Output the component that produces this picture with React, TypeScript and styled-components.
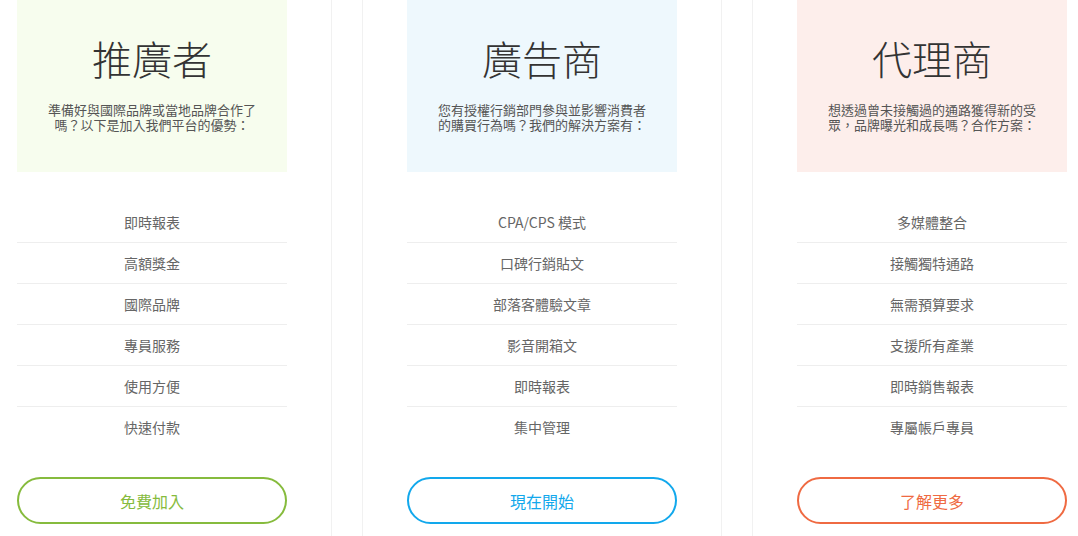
import styled, { createGlobalStyle } from "styled-components";

type Plan = {
  title: string;
  intro: string[];
  items: string[];
  cta: string;
  tint: string;
  accent: string;
};

const plans: Plan[] = [
  {
    title: "推廣者",
    intro: ["準備好與國際品牌或當地品牌合作了", "嗎？以下是加入我們平台的優勢："],
    items: ["即時報表", "高額獎金", "國際品牌", "專員服務", "使用方便", "快速付款"],
    cta: "免費加入",
    tint: "#f7fdee",
    accent: "#86bb3d",
  },
  {
    title: "廣告商",
    intro: ["您有授權行銷部門參與並影響消費者", "的購買行為嗎？我們的解決方案有："],
    items: ["CPA/CPS 模式", "口碑行銷貼文", "部落客體驗文章", "影音開箱文", "即時報表", "集中管理"],
    cta: "現在開始",
    tint: "#eef8fd",
    accent: "#12a8ec",
  },
  {
    title: "代理商",
    intro: ["想透過曾未接觸過的通路獲得新的受", "眾，品牌曝光和成長嗎？合作方案："],
    items: ["多媒體整合", "接觸獨特通路", "無需預算要求", "支援所有產業", "即時銷售報表", "專屬帳戶專員"],
    cta: "了解更多",
    tint: "#fdeeeb",
    accent: "#ef6a42",
  },
];

const App = () => {
  return (
    <>
      <GlobalStyle />
      <Row>
        {plans.map((plan) => (
          <Column key={plan.title}>
            <Header $tint={plan.tint}>
              <Title>{plan.title}</Title>
              <Intro>
                {plan.intro.map((line) => (
                  <IntroLine key={line}>{line}</IntroLine>
                ))}
              </Intro>
            </Header>

            <List>
              {plan.items.map((item) => (
                <Item key={item}>{item}</Item>
              ))}
            </List>

            <Button $accent={plan.accent}>{plan.cta}</Button>
          </Column>
        ))}
      </Row>
    </>
  );
};

const GlobalStyle = createGlobalStyle`
  html, body {
    margin: 0;
    padding: 0;
    background: #ffffff;
    overflow: hidden;
  }

  body {
    font-family: "Noto Sans CJK TC", "Noto Sans", sans-serif;
  }
`;

const Row = styled.div`
  display: flex;
  gap: 30px;
  margin-left: -28px;
  width: 1140px;
  height: 536px;
`;

const Column = styled.div`
  flex: 0 0 auto;
  width: 270px;
  padding: 0 44px;
  border-left: 1px solid #f1f1f1;
  border-right: 1px solid #f1f1f1;
  display: flex;
  flex-direction: column;
`;

const Header = styled.div<{ $tint: string }>`
  background: ${(p) => p.$tint};
  height: 172px;
  box-sizing: border-box;
  padding-top: 34px;
  text-align: center;
`;

const Title = styled.h2`
  margin: 0;
  font-size: 40px;
  line-height: 48px;
  font-weight: 300;
  color: #333333;
`;

const Intro = styled.div`
  margin-top: 21px;
  display: flex;
  flex-direction: column;
  gap: 1px;
`;

const IntroLine = styled.p`
  margin: 0;
  font-size: 13px;
  line-height: 14px;
  color: #555555;
`;

const List = styled.ul`
  list-style: none;
  margin: 30px 0 0;
  padding: 0;
`;

const Item = styled.li`
  height: 40px;
  line-height: 40px;
  text-align: center;
  font-size: 14px;
  color: #666666;

  & + & {
    border-top: 1px solid #eeeeee;
  }
`;

const Button = styled.button<{ $accent: string }>`
  margin-top: 30px;
  width: 270px;
  height: 47px;
  border: 2px solid ${(p) => p.$accent};
  border-radius: 24px;
  background: #ffffff;
  color: ${(p) => p.$accent};
  font-family: inherit;
  font-size: 16px;
  cursor: pointer;
`;

export default App;
